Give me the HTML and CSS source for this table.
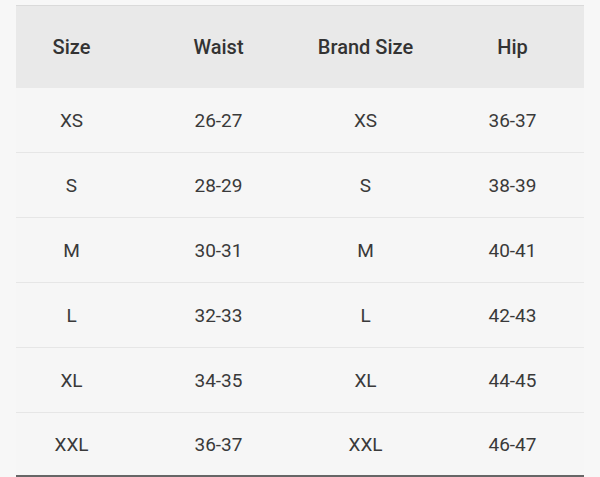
FILE: index.html
```html
<!DOCTYPE html>
<html>
<head>
<meta charset="utf-8">
<link rel="stylesheet" href="styles.css">
</head>
<body>
<div class="page">
  <div class="chart">
    <div class="row head">
      <div class="cell">Size</div>
      <div class="cell">Waist</div>
      <div class="cell">Brand Size</div>
      <div class="cell">Hip</div>
    </div>
    <div class="row">
      <div class="cell">XS</div><div class="cell">26-27</div><div class="cell">XS</div><div class="cell">36-37</div>
    </div>
    <div class="row">
      <div class="cell">S</div><div class="cell">28-29</div><div class="cell">S</div><div class="cell">38-39</div>
    </div>
    <div class="row">
      <div class="cell">M</div><div class="cell">30-31</div><div class="cell">M</div><div class="cell">40-41</div>
    </div>
    <div class="row">
      <div class="cell">L</div><div class="cell">32-33</div><div class="cell">L</div><div class="cell">42-43</div>
    </div>
    <div class="row">
      <div class="cell">XL</div><div class="cell">34-35</div><div class="cell">XL</div><div class="cell">44-45</div>
    </div>
    <div class="row last">
      <div class="cell">XXL</div><div class="cell">36-37</div><div class="cell">XXL</div><div class="cell">46-47</div>
    </div>
  </div>
</div>
</body>
</html>
```

FILE: styles.css
```css
html, body {
  margin: 0;
  padding: 0;
  background: #f7f7f7;
}
.page {
  width: 600px;
  height: 477px;
  padding: 5px 16px 0 16px;
  box-sizing: border-box;
  overflow: hidden;
}
.chart {
  width: 568px;
  overflow: hidden;
  font-family: Roboto, "Liberation Sans", sans-serif;
  font-size: 19px;
  color: #3a3a3a;
  border-bottom: 3px solid #666;
}
.row {
  display: grid;
  grid-template-columns: repeat(4, 147px);
  margin-left: -18px;
  height: 64px;
  align-items: center;
  border-bottom: 1px solid #e6e6e6;
  background: #f6f6f6;
}
.row.last {
  height: 62px;
  border-bottom: none;
}
.row.head {
  height: 82px;
  background: #e9e9e9;
  border-top: 1px solid #dadada;
  border-bottom: none;
  font-size: 20px;
  font-weight: 500;
  color: #333;
}
.cell {
  text-align: center;
}
```
